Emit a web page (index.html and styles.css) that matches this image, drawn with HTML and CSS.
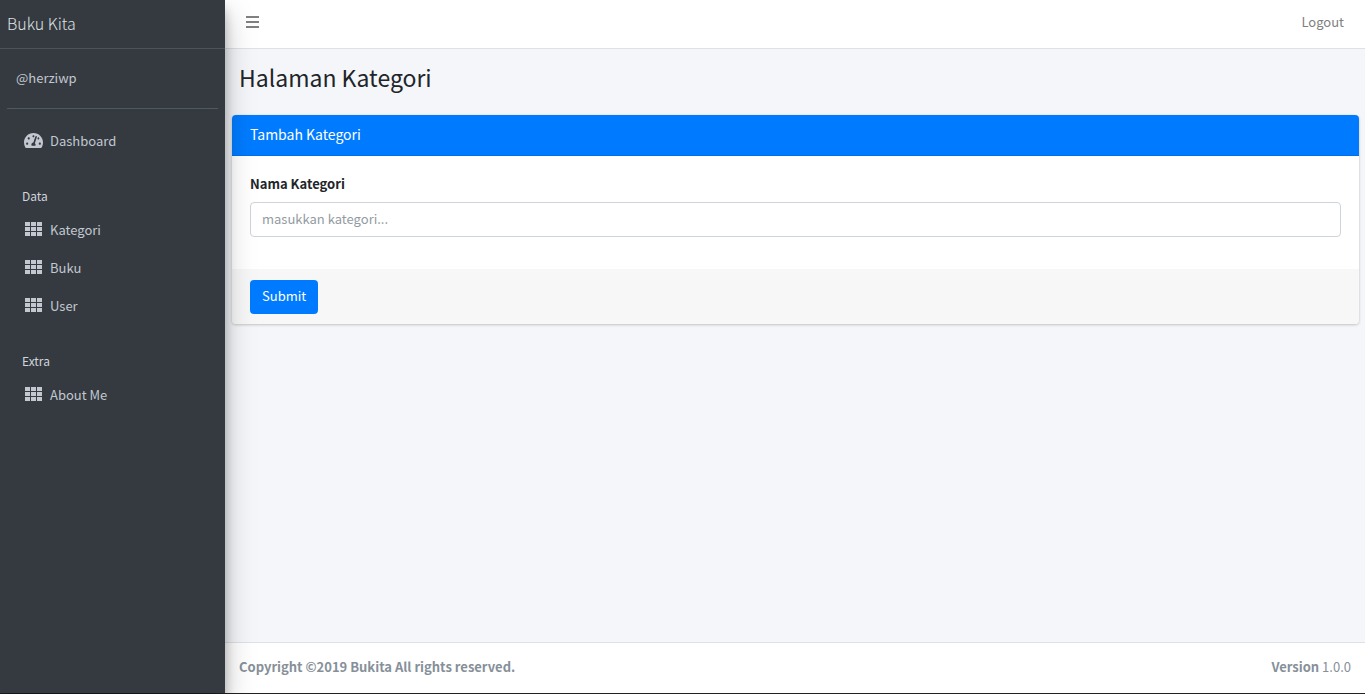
FILE: index.html
```
<!DOCTYPE html>
<html lang="id">
<head>
    <meta charset="UTF-8">
    <meta name="viewport" content="width=device-width, initial-scale=1.0">
    <title>Buku Kita | Kategori</title>
    <link rel="stylesheet" href="styles.css">
</head>
<body>

<!-- shared icons -->
<svg class="icon-defs" width="0" height="0" aria-hidden="true">
    <symbol id="icon-th" viewBox="0 0 17 14">
        <path d="M0 0h5v4H0zM6 0h5v4H6zM12 0h5v4h-5zM0 5h5v4H0zM6 5h5v4H6zM12 5h5v4h-5zM0 10h5v4H0zM6 10h5v4H6zM12 10h5v4h-5z"/>
    </symbol>
    <symbol id="icon-gauge" viewBox="0 0 576 512">
        <path d="M288 32C128.900 32 0 160.900 0 320c0 52.800 14.200 102.300 39 144.800 5.600 9.600 16.300 15.200 27.400 15.200h443.200c11.100 0 21.800-5.600 27.400-15.200C561.800 422.300 576 372.800 576 320c0-159.100-128.900-288-288-288zm0 64c14.700 0 26.600 10.100 30.300 23.700-1.100 2.300-2.600 4.200-3.500 6.700l-9.200 27.700c-5.100 3.500-11 6-17.600 6-17.700 0-32-14.300-32-32S270.300 96 288 96zM96 384c-17.700 0-32-14.300-32-32s14.300-32 32-32 32 14.300 32 32-14.300 32-32 32zm48-160c-17.700 0-32-14.300-32-32s14.300-32 32-32 32 14.300 32 32-14.300 32-32 32zm246.800-72.400l-61.300 184C343.100 347.300 352 364.500 352 384c0 11.700-3.400 22.600-8.900 32H232.900c-5.500-9.500-8.900-20.300-8.900-32 0-34 26.500-61.500 59.900-63.600l61.300-184c4.200-12.600 17.700-19.500 30.400-15.200 12.600 4.200 19.400 17.800 15.200 30.400zm14.700 57.200l15.500-46.600c3.500-1.300 7.100-2.200 11.100-2.200 17.700 0 32 14.300 32 32s-14.300 32-32 32c-11.400 0-20.900-6.300-26.600-15.200zM480 384c-17.700 0-32-14.300-32-32s14.300-32 32-32 32 14.300 32 32-14.300 32-32 32z"/>
    </symbol>
</svg>

<div class="wrapper">
    <aside class="sidebar">
        <a href="#" class="brand">Buku Kita</a>
        <div class="user-panel">
            <a href="#">@herziwp</a>
        </div>
        <nav>
            <ul class="nav-list">
                <li><a href="#" class="nav-item"><svg class="gauge"><use href="#icon-gauge"/></svg>Dashboard</a></li>
                <li class="nav-header">Data</li>
                <li><a href="#" class="nav-item"><svg><use href="#icon-th"/></svg>Kategori</a></li>
                <li><a href="#" class="nav-item"><svg><use href="#icon-th"/></svg>Buku</a></li>
                <li><a href="#" class="nav-item"><svg><use href="#icon-th"/></svg>User</a></li>
                <li class="nav-header">Extra</li>
                <li><a href="#" class="nav-item"><svg><use href="#icon-th"/></svg>About Me</a></li>
            </ul>
        </nav>
    </aside>

    <div class="main">
        <header class="navbar">
            <button type="button" class="menu-toggle" aria-label="Menu">
                <svg width="13" height="12" viewBox="0 0 13 12"><path d="M0 0h13v2H0zM0 5h13v2H0zM0 10h13v2H0z"/></svg>
            </button>
            <a href="#" class="logout">Logout</a>
        </header>

        <main class="content">
            <h1>Halaman Kategori</h1>
            <form class="card">
                <div class="card-header">
                    <h3>Tambah Kategori</h3>
                </div>
                <div class="card-body">
                    <label for="kategori">Nama Kategori</label>
                    <input type="text" id="kategori" name="kategori" placeholder="masukkan kategori...">
                </div>
                <div class="card-footer">
                    <button type="submit">Submit</button>
                </div>
            </form>
        </main>

        <footer class="footer">
            <strong>Copyright ©2019 Bukita All rights reserved.</strong>
            <div><b>Version</b> 1.0.0</div>
        </footer>
    </div>
</div>

</body>
</html>
```
FILE: styles.css
```
* {
    box-sizing: border-box;
}
body {
    margin: 0;
    font-family: "Source Sans Pro", "Noto Sans CJK SC", sans-serif;
    font-size: 13px;
    line-height: 20px;
    color: #212529;
    background-color: #f4f6f9;
}
a {
    text-decoration: none;
}
h1, h3 {
    margin: 0;
    font-weight: 400;
}
.icon-defs {
    position: absolute;
}
.wrapper {
    display: flex;
    min-height: 100vh;
    border-bottom: 1px solid #222;
}

/* Sidebar */
.sidebar {
    flex: 0 0 225px;
    z-index: 1;
    background-color: #343a40;
    box-shadow: 0 14px 28px rgba(0,0,0,0.25), 0 10px 10px rgba(0,0,0,0.22);
}
.sidebar a {
    color: #c2c7d0;
}
.sidebar .brand {
    display: block;
    height: 49px;
    padding: 13px 7px;
    border-bottom: 1px solid #4b545c;
    font-size: 16px;
    font-weight: 300;
    color: #dee0e2;
}
.user-panel {
    margin: 0 7px 13px;
    padding: 19px 9px 20px;
    border-bottom: 1px solid #4f5962;
}
.nav-list {
    list-style: none;
    margin: 0;
    padding: 0 7px;
}
.nav-item {
    display: flex;
    align-items: center;
    gap: 8px;
    height: 38px;
    padding: 0 18px;
}
.nav-item svg {
    width: 17px;
    height: 14px;
    margin-bottom: 2px;
    fill: #c2c7d0;
}
.nav-item .gauge {
    width: 19px;
    height: 17px;
    margin: 0 -1px 2px;
}
.nav-header {
    padding: 26px 15px 5px;
    font-size: 12px;
    color: #d0d4db;
}

/* Top bar */
.main {
    flex: 1;
    min-width: 0;
    display: flex;
    flex-direction: column;
}
.navbar {
    display: flex;
    justify-content: space-between;
    align-items: center;
    height: 49px;
    padding: 0 21px 4px;
    background-color: #fff;
    border-bottom: 1px solid #dee2e6;
}
.menu-toggle {
    display: flex;
    padding: 0;
    border: none;
    background: none;
    cursor: pointer;
}
.menu-toggle svg {
    fill: #808080;
}
.logout {
    color: #808080;
}

/* Content */
.content {
    flex: 1;
    padding: 0 6px 0 7px;
}
h1 {
    padding: 13px 7px 23px;
    font-size: 23px;
    line-height: 30px;
}
.card {
    overflow: hidden;
    background-color: #fff;
    border-radius: 4px;
    box-shadow: 0 0 1px rgba(0,0,0,0.125), 0 1px 3px rgba(0,0,0,0.2);
}
.card-header {
    padding: 9px 18px 11px;
    background-color: #007bff;
    border-bottom: 1px solid #0070e8;
    color: #fff;
}
.card-header h3 {
    font-size: 14px;
    line-height: 20px;
}
.card-body {
    padding: 18px 18px 32px;
}
label {
    display: block;
    margin-bottom: 8px;
    font-weight: 700;
}
input {
    display: block;
    width: 100%;
    height: 35px;
    padding: 0 11px 2px;
    border: 1px solid #ced4da;
    border-radius: 4px;
    font: inherit;
}
input::placeholder {
    color: #939ba2;
}
.card-footer {
    padding: 11px 18px 10px;
    background-color: #f7f7f7;
}
.card-footer button {
    display: block;
    height: 34px;
    padding: 0 12px 2px;
    border: none;
    border-radius: 4px;
    background-color: #007bff;
    color: #fff;
    font: inherit;
    cursor: pointer;
}
.card-footer button:hover {
    background-color: #0069d9;
}

/* Footer */
.footer {
    display: flex;
    justify-content: space-between;
    padding: 14px 14px 16px;
    background-color: #fff;
    border-top: 1px solid #dee2e6;
    color: #869099;
}
```
